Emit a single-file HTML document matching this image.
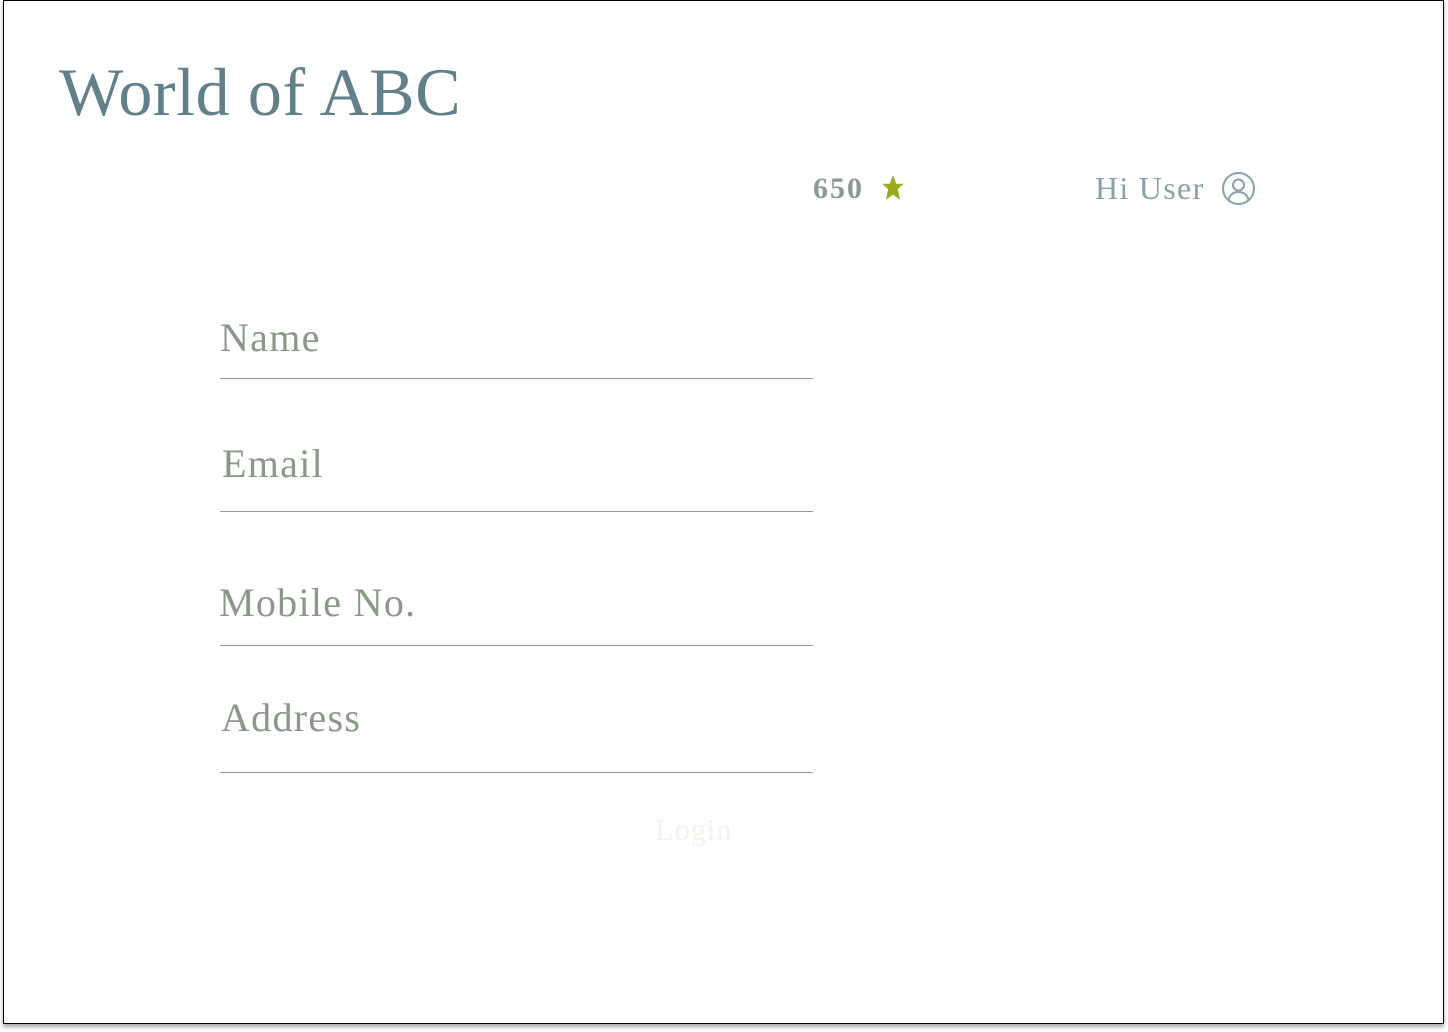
<!DOCTYPE html>
<html><head><style>
html,body{margin:0;padding:0;background:#fff;}
body{width:1448px;height:1032px;position:relative;overflow:hidden;font-family:"Liberation Serif",serif;}
.frame{position:absolute;left:3px;top:0;width:1439px;height:1022px;border:1px solid #000;box-shadow:0 3px 4px rgba(0,0,0,0.35);background:#fff;}
.t{position:absolute;white-space:nowrap;}
.title{left:59px;top:53px;font-size:68px;letter-spacing:0.6px;color:#628089;}
.lbl{font-size:40px;letter-spacing:1.3px;color:#8a9888;}
.line{position:absolute;left:220px;width:593px;height:1px;background:#999;}
</style></head><body>
<div class="frame"></div>
<div class="t title">World of ABC</div>
<div class="t" style="left:813px;top:172px;font-size:30px;letter-spacing:2px;color:#8a9a94;font-weight:bold;">650</div>
<svg class="t" style="left:881px;top:174px" width="24" height="28" viewBox="0 0 22 26"><polygon points="11,1 14,9 21,9 15.5,14 17.5,24 11,19 4.5,24 6.5,14 1,9 8,9" fill="#9aab1b"/></svg>
<div class="t" style="left:1095px;top:170px;font-size:32px;letter-spacing:1.3px;color:#87a2a8;">Hi User</div>
<svg class="t" style="left:1221px;top:171px" width="35" height="35" viewBox="0 0 35 35"><circle cx="17.5" cy="17.5" r="15.5" fill="none" stroke="#87a2a8" stroke-width="2"/><circle cx="17.5" cy="14" r="5.5" fill="none" stroke="#87a2a8" stroke-width="2"/><path d="M7.5 29 C9 23,13 21,17.5 21 C22 21,26 23,27.5 29" fill="none" stroke="#87a2a8" stroke-width="2"/></svg>
<div class="t lbl" style="left:220px;top:314px;">Name</div>
<div class="line" style="top:378px"></div>
<div class="t lbl" style="left:222px;top:440px;">Email</div>
<div class="line" style="top:511px"></div>
<div class="t lbl" style="left:219px;top:579px;">Mobile No.</div>
<div class="line" style="top:645px"></div>
<div class="t lbl" style="left:221px;top:694px;">Address</div>
<div class="line" style="top:772px"></div>
<div class="t" style="left:655px;top:812px;font-size:31px;letter-spacing:0.6px;color:#f0f6ee;">Login</div>
</body></html>
